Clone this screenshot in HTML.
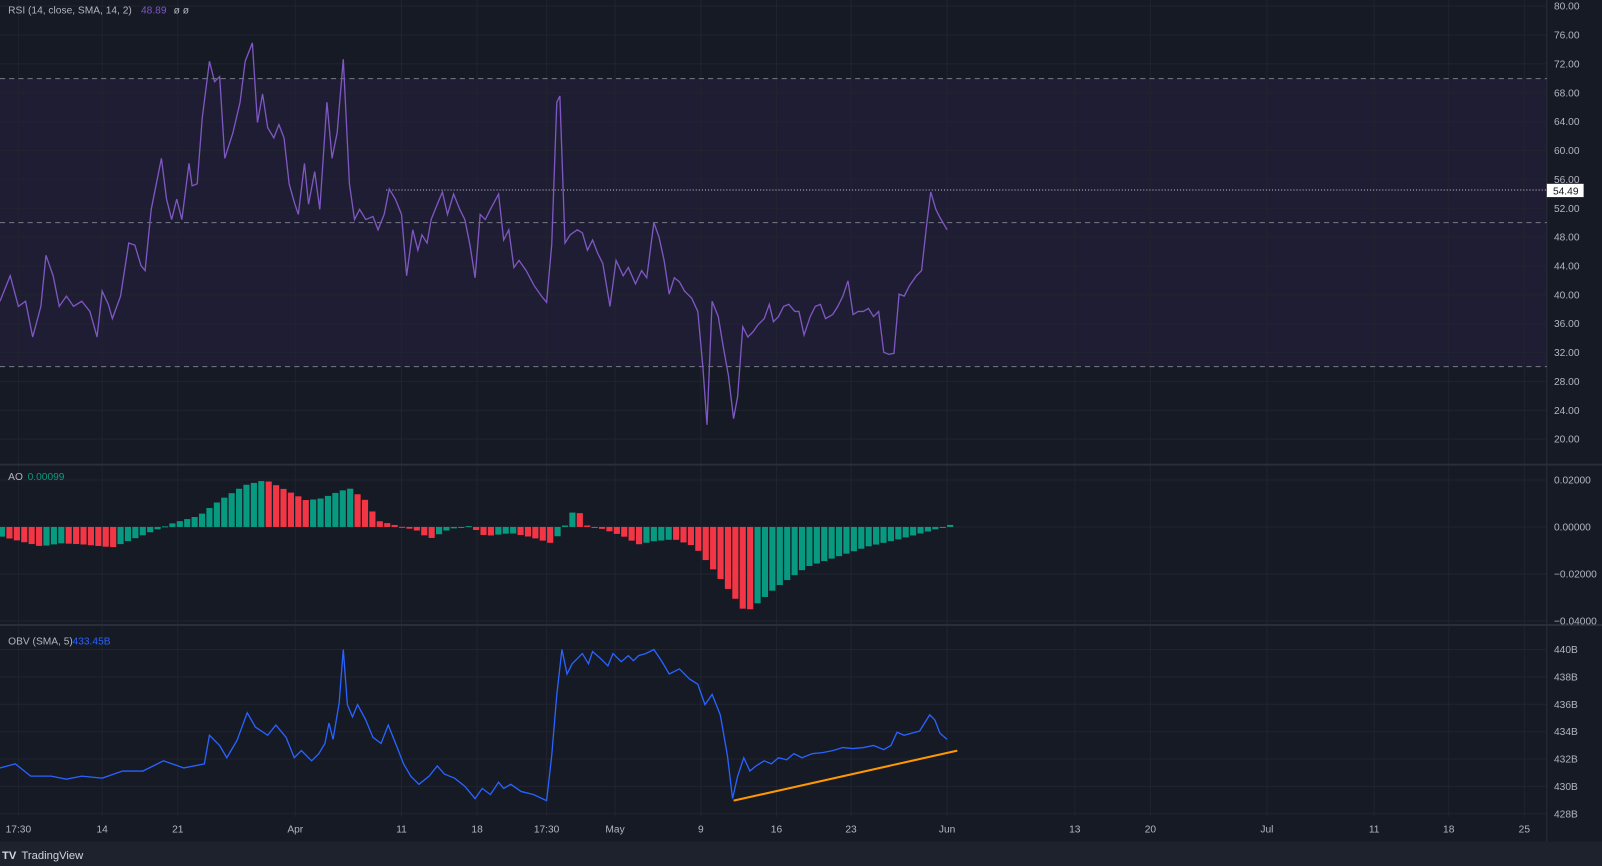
<!DOCTYPE html>
<html><head><meta charset="utf-8"><style>
html,body{margin:0;padding:0;background:#161a25;overflow:hidden}
svg{display:block}
text{font-family:"Liberation Sans",sans-serif;}
</style></head><body>
<svg id="s" width="1602" height="866" viewBox="0 0 1568 848" preserveAspectRatio="none" xmlns="http://www.w3.org/2000/svg">
<rect width="1568" height="848" fill="#161a25"/>
<!-- RSI band -->
<rect x="0" y="77" width="1514" height="282" fill="#1f1d33"/>
<g id="grid" stroke="#20242f" stroke-width="1"></g>
<!-- separators -->
<line x1="0" y1="455" x2="1568" y2="455" stroke="#2a2e39" stroke-width="2"/>
<line x1="0" y1="612" x2="1568" y2="612" stroke="#2a2e39" stroke-width="2"/>
<line x1="1514" y1="0" x2="1514" y2="824" stroke="#2a2e39"/>
<!-- RSI dashed -->
<g stroke="#787b86" stroke-dasharray="5,4" stroke-width="1">
<line x1="0" y1="77" x2="1514" y2="77"/><line x1="0" y1="218" x2="1514" y2="218"/><line x1="0" y1="359" x2="1514" y2="359"/>
</g>
<line x1="378" y1="186" x2="1514" y2="186" stroke="#c8c8d0" stroke-dasharray="1,2"/>
<polyline fill="none" stroke="#7e57c2" stroke-width="1.3" points="0,295 10,270 18,300 25,295 32,330 40,300 45,250 52,270 58,300 65,290 72,300 80,295 88,305 95,330 100,285 106,298 110,312 118,290 126,238 132,240 138,260 142,265 148,205 155,170 158,155 163,195 168,215 173,195 178,215 185,160 188,182 193,180 198,115 205,60 210,80 215,75 220,155 228,130 235,100 240,60 247,42 252,120 257,92 262,125 268,135 273,122 278,135 283,180 288,198 292,210 298,160 302,200 308,168 313,205 320,100 325,155 330,130 336,58 342,180 347,215 352,205 358,215 365,212 370,225 376,210 381,185 387,195 393,210 398,270 404,225 409,245 413,230 418,238 422,215 428,200 433,188 438,210 444,190 450,205 455,215 460,240 465,272 470,210 475,215 480,205 488,190 493,235 498,225 503,262 508,255 515,265 523,280 530,290 535,296 540,240 545,100 548,94 553,238 558,230 565,225 570,228 575,245 580,235 585,248 590,258 597,300 603,255 610,270 615,262 622,278 628,265 633,272 640,218 645,232 650,255 655,288 660,272 665,276 670,285 677,292 683,305 688,360 692,416 697,295 703,310 708,340 713,368 718,410 722,388 727,320 732,330 737,325 742,318 748,312 753,298 757,315 762,310 767,300 772,298 778,305 782,305 787,328 793,310 798,300 803,298 808,312 815,308 820,300 825,290 830,275 835,308 840,305 845,305 850,302 855,310 860,305 865,345 870,347 875,346 880,288 885,290 890,280 897,270 902,265 907,220 911,188 916,205 920,213 927,225"/>
<g id="ao"></g>
<polyline fill="none" stroke="#2962ff" stroke-width="1.3" points="0,752 15,748 30,760 50,760 65,763 80,760 100,762 120,755 140,755 160,745 180,752 200,748 205,720 215,730 222,742 232,725 242,698 250,712 262,720 270,710 280,722 288,742 295,735 305,745 312,738 318,728 322,708 326,724 332,688 336,636 340,690 345,702 350,690 358,705 365,722 373,728 380,710 388,730 395,748 402,760 410,768 420,760 428,750 435,758 445,762 455,770 465,782 472,772 480,778 488,766 493,772 500,768 510,775 522,778 535,784 540,740 545,680 550,636 555,660 560,650 565,645 570,640 576,650 580,638 588,645 595,652 600,640 608,648 615,642 620,647 625,642 632,640 640,636 648,648 655,660 665,655 675,665 683,670 690,690 697,680 705,700 712,740 717,782 722,760 728,742 734,755 740,750 748,745 755,748 762,742 770,744 777,738 785,742 795,738 805,737 815,735 825,732 835,733 845,732 855,730 865,734 872,730 878,717 885,720 892,718 900,716 905,708 910,700 915,705 920,718 927,724"/>
<line x1="718" y1="784" x2="937" y2="735" stroke="#ff9800" stroke-width="2"/>
<g id="ylab" font-size="10" fill="#b2b5be"></g>
<rect x="1514" y="180" width="36" height="13" fill="#fff"/>
<text x="1520" y="190.5" font-size="10" fill="#131722">54.49</text>
<g id="xlab" font-size="10" fill="#b2b5be" text-anchor="middle"></g>
<text x="8" y="13" font-size="10" fill="#b2b5be">RSI (14, close, SMA, 14, 2)</text>
<text x="138" y="13" font-size="10" fill="#7e57c2">48.89</text>
<text x="170" y="13" font-size="10" fill="#b2b5be">ø  ø</text>
<text x="8" y="470" font-size="10" fill="#b2b5be">AO</text>
<text x="27" y="470" font-size="10" fill="#089981">0.00099</text>
<text x="8" y="631" font-size="10" fill="#b2b5be">OBV (SMA, 5)</text>
<text x="71" y="631" font-size="10" fill="#2962ff">433.45B</text>
<rect x="0" y="824" width="1568" height="24" fill="#1e222d"/>
<text x="2" y="841" font-size="11" font-weight="bold" fill="#d1d4dc">TV</text>
<text x="21" y="841" font-size="11" fill="#d1d4dc">TradingView</text>
</svg>
<script>
var NS="http://www.w3.org/2000/svg";
function el(p,t,a,txt){var e=document.createElementNS(NS,t);for(var k in a)e.setAttribute(k,a[k]);if(txt)e.textContent=txt;document.getElementById(p).appendChild(e);}
var xs=[[18,"17:30"],[100,"14"],[174,"21"],[289,"Apr"],[393,"11"],[467,"18"],[535,"17:30"],[602,"May"],[686,"9"],[760,"16"],[833,"23"],[927,"Jun"],[1052,"13"],[1126,"20"],[1240,"Jul"],[1345,"11"],[1418,"18"],[1492,"25"]];
xs.forEach(function(a){el("grid","line",{x1:a[0],x2:a[0],y1:0,y2:800});el("xlab","text",{x:a[0],y:815},a[1]);});
for(var v=80;v>=20;v-=4){var y=6+(80-v)*7.067;el("grid","line",{x1:0,x2:1514,y1:y,y2:y});el("ylab","text",{x:1521,y:y+3.5},v.toFixed(2));}
[[470,"0.02000"],[516,"0.00000"],[562,"\u22120.02000"],[608,"\u22120.04000"]].forEach(function(a){el("grid","line",{x1:0,x2:1514,y1:a[0],y2:a[0]});el("ylab","text",{x:1521,y:a[0]+3.5},a[1]);});
for(var i=0;i<7;i++){var y=636+i*26.8;el("grid","line",{x1:0,x2:1514,y1:y,y2:y});el("ylab","text",{x:1521,y:y+3.5},(440-2*i)+"B");}
var k=[[0,525],[40,535],[60,532],[80,533],[110,536],[130,528],[150,520],[170,512],[195,505],[215,490],[240,475],[260,470],[280,480],[300,490],[315,488],[330,482],[342,478],[358,490],[370,510],[390,515],[410,520],[420,528],[440,518],[460,515],[475,525],[500,522],[520,526],[540,532],[550,520],[560,502],[566,500],[575,515],[590,518],[610,525],[625,533],[640,530],[660,528],[680,535],[700,560],[715,580],[730,600],[740,592],[760,575],[790,555],[820,545],[850,535],[880,528],[910,520],[930,514]];
function f(x){for(var i=1;i<k.length;i++){if(x<=k[i][0]){var a=k[i-1],b=k[i];return a[1]+(b[1]-a[1])*(x-a[0])/(b[0]-a[0]);}}return 514;}
var prev=null;
for(var x=2;x<=930;x+=7.25){var y=f(x);var col=(prev===null||y<=prev)?"#089981":"#f23645";
 // y smaller = higher value => increasing => green
 if(prev!==null&&y>prev)col="#f23645";
 el("ao","rect",{x:x-3,y:Math.min(y,516),width:6,height:Math.max(1,Math.abs(y-516)),fill:col});prev=y;}
</script>
</body></html>
